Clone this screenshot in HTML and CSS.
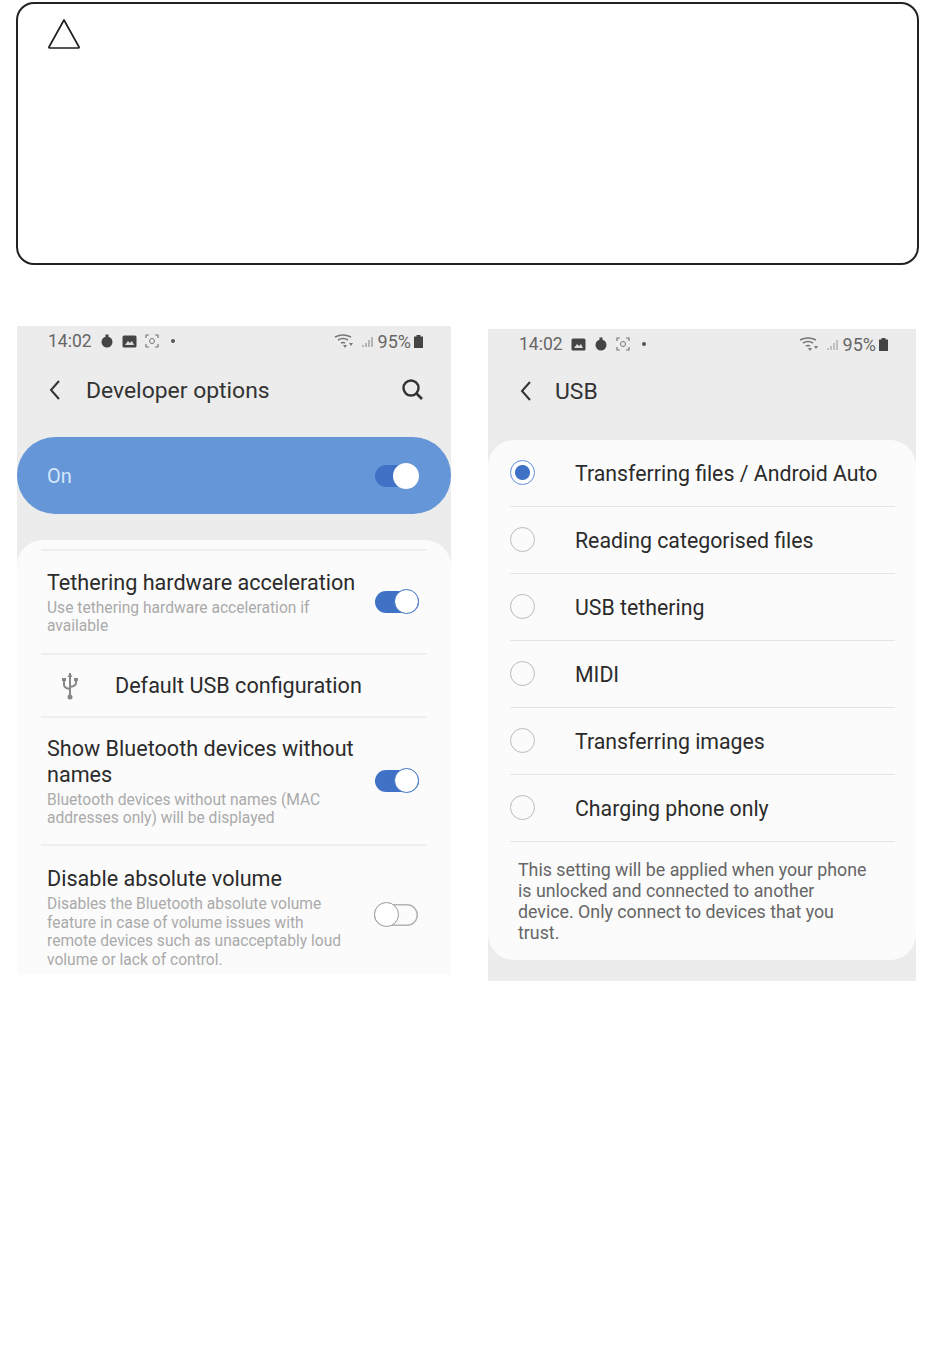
FILE: index.html
```html
<!DOCTYPE html>
<html lang="en">
<head>
    <meta charset="UTF-8">
    <title>Developer options and USB settings</title>
    <link rel="stylesheet" href="styles.css">
</head>
<body>
    <div class="notice">
        <svg class="notice-icon" width="34" height="32" viewBox="0 0 34 32">
            <path d="M17 2 L32 29 Q32.500 30 31 30 L3 30 Q1.500 30 2 29 Z" fill="none" stroke="#222" stroke-width="1.700" stroke-linejoin="round"/>
        </svg>
    </div>

    <div class="screens">
        <!-- Developer options -->
        <div class="phone phone-dev">
            <div class="status">
                <span class="clock">14:02</span>
                <svg class="st-icon" width="14" height="14" viewBox="0 0 14 14"><circle cx="7" cy="8" r="5.500" fill="#444"/><rect x="5.500" y="0.500" width="3" height="2.500" fill="#444"/></svg>
                <svg class="st-icon" width="15" height="13" viewBox="0 0 15 13"><rect x="0.500" y="0.500" width="14" height="12" rx="1.500" fill="#444"/><path d="M3 10 L6 6 L8 8 L10 6 L12 10 Z" fill="#ddd"/></svg>
                <svg class="st-icon" width="14" height="14" viewBox="0 0 14 14"><path d="M1 4 V1 H4 M10 1 H13 V4 M13 10 V13 H10 M4 13 H1 V10" fill="none" stroke="#777" stroke-width="1.200"/><circle cx="7" cy="7" r="2.500" fill="none" stroke="#777"/></svg>
                <span class="st-dot"></span>
                <span class="st-right">
                    <svg class="st-icon st-wifi" width="20" height="15" viewBox="0 0 20 15"><path d="M1 3 Q9 -1 17 3 M4 6 Q9 3 14 6 M7 9 Q9 8 11 9" fill="none" stroke="#777" stroke-width="1.600"/><path d="M9 11 L11 14 L13 11 Z M15 9 H19 L17 12 Z" fill="#777"/></svg>
                    <svg class="st-icon" width="13" height="13" viewBox="0 0 13 13"><path d="M1 12 V10 M4 12 V8 M7 12 V5 M10 12 V2" stroke="#999" stroke-width="1.300"/></svg>
                    <span class="pct">95%</span>
                    <svg class="st-icon" width="9" height="13" viewBox="0 0 9 13"><rect x="0" y="1.500" width="9" height="11.500" fill="#444"/><rect x="2.500" y="0" width="4" height="2" fill="#444"/></svg>
                </span>
            </div>
            <div class="titlebar">
                <svg class="back" width="14" height="22" viewBox="0 0 14 22"><path d="M11 2 L3 11 L11 20" fill="none" stroke="#333" stroke-width="2"/></svg>
                <span class="title">Developer options</span>
                <svg class="search" width="24" height="24" viewBox="0 0 24 24"><circle cx="11" cy="10" r="7.500" fill="none" stroke="#333" stroke-width="2.400"/><path d="M16 15 L22 21" stroke="#333" stroke-width="2.600"/></svg>
            </div>
            <div class="master">
                <span class="master-label">On</span>
                <span class="toggle master-toggle"></span>
            </div>
            <div class="card">
                <div class="row row-tether">
                    <div class="row-text">
                        <div class="row-title">Tethering hardware acceleration</div>
                        <div class="row-sub">Use tethering hardware acceleration if available</div>
                    </div>
                    <span class="toggle"></span>
                </div>
                <div class="row row-usb">
                    <svg class="usb" width="18" height="28" viewBox="0 0 18 28"><path d="M9 1 V27 M3 7 V13 Q3 16 9 17 M15 7 V11 Q15 14 9 15" fill="none" stroke="#888" stroke-width="2"/><path d="M6.500 5 L9 1 L11.500 5 Z M1 6 H5 V9 H1 Z M13 6 H17 V9 H13 Z" fill="#888"/><circle cx="9" cy="25" r="2.500" fill="#888"/></svg>
                    <span class="row-title">Default USB configuration</span>
                </div>
                <div class="row row-names">
                    <div class="row-text">
                        <div class="row-title">Show Bluetooth devices without names</div>
                        <div class="row-sub">Bluetooth devices without names (MAC addresses only) will be displayed</div>
                    </div>
                    <span class="toggle"></span>
                </div>
                <div class="row row-volume">
                    <div class="row-text">
                        <div class="row-title">Disable absolute volume</div>
                        <div class="row-sub">Disables the Bluetooth absolute volume feature in case of volume issues with remote devices such as unacceptably loud volume or lack of control.</div>
                    </div>
                    <span class="toggle off"></span>
                </div>
            </div>
        </div>

        <!-- USB -->
        <div class="phone phone-usb">
            <div class="status">
                <span class="clock">14:02</span>
                <svg class="st-icon" width="15" height="13" viewBox="0 0 15 13"><rect x="0.500" y="0.500" width="14" height="12" rx="1.500" fill="#444"/><path d="M3 10 L6 6 L8 8 L10 6 L12 10 Z" fill="#ddd"/></svg>
                <svg class="st-icon" width="14" height="14" viewBox="0 0 14 14"><circle cx="7" cy="8" r="5.500" fill="#444"/><rect x="5.500" y="0.500" width="3" height="2.500" fill="#444"/></svg>
                <svg class="st-icon" width="14" height="14" viewBox="0 0 14 14"><path d="M1 4 V1 H4 M10 1 H13 V4 M13 10 V13 H10 M4 13 H1 V10" fill="none" stroke="#777" stroke-width="1.200"/><circle cx="7" cy="7" r="2.500" fill="none" stroke="#777"/></svg>
                <span class="st-dot"></span>
                <span class="st-right">
                    <svg class="st-icon st-wifi" width="20" height="15" viewBox="0 0 20 15"><path d="M1 3 Q9 -1 17 3 M4 6 Q9 3 14 6 M7 9 Q9 8 11 9" fill="none" stroke="#777" stroke-width="1.600"/><path d="M9 11 L11 14 L13 11 Z M15 9 H19 L17 12 Z" fill="#777"/></svg>
                    <svg class="st-icon" width="13" height="13" viewBox="0 0 13 13"><path d="M1 12 V10 M4 12 V8 M7 12 V5 M10 12 V2" stroke="#aaa" stroke-width="1.300"/></svg>
                    <span class="pct">95%</span>
                    <svg class="st-icon" width="9" height="13" viewBox="0 0 9 13"><rect x="0" y="1.500" width="9" height="11.500" fill="#444"/><rect x="2.500" y="0" width="4" height="2" fill="#444"/></svg>
                </span>
            </div>
            <div class="titlebar">
                <svg class="back" width="14" height="22" viewBox="0 0 14 22"><path d="M11 2 L3 11 L11 20" fill="none" stroke="#333" stroke-width="2"/></svg>
                <span class="title">USB</span>
            </div>
            <div class="card usb-card">
                <div class="option"><span class="radio checked"></span><span class="row-title">Transferring files / Android Auto</span></div>
                <div class="option"><span class="radio"></span><span class="row-title">Reading categorised files</span></div>
                <div class="option"><span class="radio"></span><span class="row-title">USB tethering</span></div>
                <div class="option"><span class="radio"></span><span class="row-title">MIDI</span></div>
                <div class="option"><span class="radio"></span><span class="row-title">Transferring images</span></div>
                <div class="option"><span class="radio"></span><span class="row-title">Charging phone only</span></div>
                <p class="usb-note">This setting will be applied when your phone is unlocked and connected to another device. Only connect to devices that you trust.</p>
            </div>
        </div>
    </div>
</body>
</html>
```

FILE: styles.css
```css
body {
    margin: 0;
    padding: 2px 31px 0 16px;
    background-color: white;
    font-family: Roboto, "Liberation Sans", sans-serif;
}
.notice {
    height: 245px;
    border: 2px solid #222;
    border-radius: 18px;
    padding: 14px 0 0 29px;
}
.notice-icon {
    display: block;
}
.screens {
    display: flex;
    align-items: flex-start;
    gap: 37px;
    margin: 61px 0 0 1px;
}
.phone {
    background-color: #ececec;
    overflow: hidden;
}
.phone-dev {
    width: 434px;
    height: 649px;
}
.phone-usb {
    width: 428px;
    height: 652px;
    margin-top: 3px;
}
.status {
    display: flex;
    align-items: center;
    gap: 8px;
    height: 30px;
    padding: 0 28px 0 31px;
    color: #666;
    font-size: 17.500px;
}
.st-icon {
    display: block;
    flex: none;
}
.st-wifi {
    margin-right: 5px;
}
.st-dot {
    width: 4px;
    height: 4px;
    margin-left: 4px;
    border-radius: 50%;
    background-color: #555;
}
.st-right {
    display: flex;
    align-items: center;
    gap: 3px;
    margin-left: auto;
}
.pct {
    color: #666;
    font-size: 18px;
}
.titlebar {
    display: flex;
    align-items: center;
    height: 68px;
    padding: 0 27px 0 31px;
}
.back {
    flex: none;
}
.title {
    margin-left: 24px;
    color: #333;
    font-size: 22.900px;
}
.search {
    margin-left: auto;
}
.master {
    display: flex;
    align-items: center;
    justify-content: space-between;
    height: 77px;
    margin-top: 13px;
    padding: 0 32px 0 30px;
    border-radius: 38px;
    background-color: #6596d8;
}
.master-label {
    color: #d6e6fb;
    font-size: 20px;
}
.toggle {
    position: relative;
    flex: none;
    width: 44px;
    height: 22px;
    border-radius: 11px;
    background-color: #3f72c4;
}
.toggle::after {
    content: "";
    position: absolute;
    top: -2px;
    right: 0;
    width: 23px;
    height: 23px;
    border: 1.500px solid #3f72c4;
    border-radius: 50%;
    background-color: white;
}
.master-toggle::after {
    width: 26px;
    height: 26px;
    border: none;
}
.toggle.off {
    background-color: transparent;
    box-shadow: inset 0 0 0 1.500px #b4b4b4;
}
.toggle.off::after {
    left: 0;
    right: auto;
    border-color: #999;
}
.card {
    margin-top: 26px;
    padding-top: 9px;
    height: 600px;
    border-radius: 26px 26px 0 0;
    background-color: #fbfbfb;
}
.row {
    display: flex;
    align-items: center;
    justify-content: space-between;
    margin: 0 24px;
    padding: 0 8px 0 6px;
    border-top: 2px solid #efefef;
}
.row-tether {
    height: 102px;
}
.row-usb {
    justify-content: flex-start;
    gap: 36px;
    height: 61px;
    padding-left: 20px;
}
.row-names {
    height: 126px;
}
.row-volume {
    align-items: flex-start;
    height: 128px;
    padding-top: 19px;
}
.row-volume .toggle {
    margin-top: 39px;
    margin-right: 1px;
}
.row-text {
    width: 312px;
    padding-top: 1px;
}
.row-title {
    color: #2b2b2b;
    font-size: 21.600px;
    line-height: 26px;
}
.row-sub {
    margin-top: 3px;
    width: 300px;
    color: #aaaaaa;
    font-size: 15.600px;
    line-height: 18.500px;
}
.phone-usb .titlebar {
    margin-top: -2px;
}
.phone-usb .title {
    margin-left: 22px;
}
.usb-card {
    margin-top: 15px;
    padding-top: 0;
    height: 520px;
    border-radius: 26px;
}
.option {
    display: flex;
    align-items: center;
    gap: 40px;
    height: 65px;
    margin: 0 21px 0 22px;
    padding-top: 1px;
    border-bottom: 1px solid #e4e4e4;
}
.option .row-title {
    font-size: 21.300px;
}
.radio {
    flex: none;
    box-sizing: border-box;
    width: 25px;
    height: 25px;
    margin-bottom: 2px;
    border: 1.500px solid #bbbbbb;
    border-radius: 50%;
}
.radio.checked {
    border-color: #5f8fdc;
    background: radial-gradient(circle, #3f72c4 0 7px, white 8px);
}
.usb-note {
    width: 352px;
    margin: 17px 0 0 30px;
    color: #666;
    font-size: 17.800px;
    line-height: 21px;
}
```
